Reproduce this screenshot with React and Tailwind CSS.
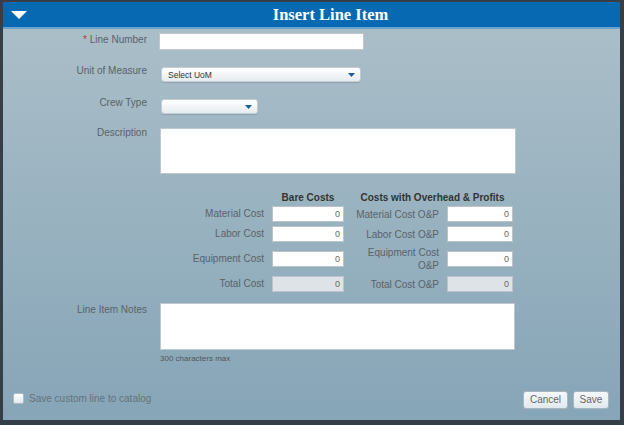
import React from 'react';

// Insert Line Item dialog
const Arrow = () => (
    <svg width="7" height="4" viewBox="0 0 7 4" className="shrink-0">
        <path d="M0 0 L7 0 L3.5 4 Z" fill="#1d5ca6" />
    </svg>
);

function Select({ width, text }) {
    return (
        <div className={`${width} h-[15px] mt-[2px] flex items-center justify-between pl-[6px] pr-[5px] rounded-[3px] border border-[#c5ced5] bg-gradient-to-b from-white to-[#e6ecf0] shadow-[0_1px_1px_rgba(0,0,0,0.12)]`}>
            <span className="text-[8.5px] leading-[10px] text-[#333]">{text}</span>
            <Arrow />
        </div>
    );
}

function Row({ label, required, children, className = '', labelClass = 'mt-[1px]' }) {
    return (
        <div className={`flex items-start ${className}`}>
            <div className={`w-[144px] text-right text-[#59636a] ${labelClass}`}>
                {required && <span className="text-[#b0413e]">* </span>}
                {label}
            </div>
            {children}
        </div>
    );
}

function CostInput({ disabled }) {
    return (
        <input
            readOnly
            value="0"
            className={`h-4 w-full border border-[#bcc4ca] text-right pr-[3px] text-[9px] text-[#666] outline-none ${disabled ? 'bg-[#dde3e7]' : 'bg-white'}`}
        />
    );
}

const costRows = [
    { left: 'Material Cost', right: 'Material Cost O&P' },
    { left: 'Labor Cost', right: 'Labor Cost O&P' },
    { left: 'Equipment Cost', right: 'Equipment Cost O&P' },
    { left: 'Total Cost', right: 'Total Cost O&P', disabled: true },
];

export default function App() {
    return (
        <div className="w-[624px] h-[425px] flex flex-col border-l-[3px] border-r-[4px] border-t-[2px] border-b-[5px] border-[#363f47] font-['Liberation_Sans',Arial,sans-serif] text-[10px] leading-[12px]">
            <div className="h-[27px] shrink-0 flex items-center bg-[#0869b3] border-b-2 border-[#69a2cf]">
                <svg width="16" height="8" viewBox="0 0 16 8" className="ml-[8px] shrink-0">
                    <path d="M0 0 L16 0 L8 8 Z" fill="#fff" />
                </svg>
                <div className="flex-1 text-center pl-[14px] text-white font-bold text-[16.5px] font-['Liberation_Serif','Times_New_Roman',serif]">
                    Insert Line Item
                </div>
            </div>

            <div className="flex-1 flex flex-col pt-[4px] bg-gradient-to-b from-[#aabec8] to-[#86a5b7]">
                <Row label="Line Number" required>
                    <input readOnly className="ml-[12px] h-[17px] w-[205px] border border-[#c0c8ce] bg-white outline-none" />
                </Row>

                <Row label="Unit of Measure" labelClass="" className="mt-[15px]">
                    <div className="ml-[14px]"><Select width="w-[200px]" text="Select UoM" /></div>
                </Row>

                <Row label="Crew Type" labelClass="" className="mt-[15px]">
                    <div className="ml-[14px]"><Select width="w-[97px]" text="" /></div>
                </Row>

                <Row label="Description" labelClass="" className="mt-[13px]">
                    <textarea readOnly className="ml-[13px] mt-[1px] h-[46px] w-[356px] resize-none border border-[#bfc7cd] bg-white outline-none" />
                </Row>

                <div className="ml-[189px] mt-[18px] mb-[2px] grid grid-cols-[72px_72px_87px_66px] gap-x-2 font-bold text-[#333]">
                    <div className="col-start-2 text-center">Bare Costs</div>
                    <div className="col-span-2 text-center">Costs with Overhead &amp; Profits</div>
                </div>

                <div className="ml-[189px] grid grid-cols-[72px_72px_87px_66px] gap-x-2 gap-y-1 items-center text-[#59636a]">
                    {costRows.map((r) => (
                        <React.Fragment key={r.left}>
                            <div className="text-right whitespace-nowrap">{r.left}</div>
                            <CostInput disabled={r.disabled} />
                            <div className="text-right leading-[13px]">{r.right}</div>
                            <CostInput disabled={r.disabled} />
                        </React.Fragment>
                    ))}
                </div>

                <Row label="Line Item Notes" className="mt-[11px]">
                    <textarea readOnly className="ml-[13px] h-[47px] w-[355px] resize-none border border-[#bfc7cd] bg-white outline-none" />
                </Row>
                <div className="ml-[157px] mt-[4px] text-[8px] leading-[10px] text-[#555]">300 characters max</div>

                <div className="mt-auto flex items-center justify-between pl-[10px] pr-[11px] pb-[11px]">
                    <label className="flex items-center gap-[5px] -mt-[3px] text-[#66737b]">
                        <span className="w-[11px] h-[11px] rounded-[2px] border border-[#b3bcc3] bg-gradient-to-b from-white to-[#e4e9ed]" />
                        Save custom line to catalog
                    </label>
                    <div className="flex gap-[5px]">
                        <button className="h-[18px] w-[45px] rounded-[3px] border border-[#aab6be] bg-gradient-to-b from-[#f6f9fb] to-[#e2e9ee] text-[#666] text-[10px]">Cancel</button>
                        <button className="h-[18px] w-[36px] rounded-[3px] border border-[#aab6be] bg-gradient-to-b from-[#f6f9fb] to-[#e2e9ee] text-[#666] text-[10px]">Save</button>
                    </div>
                </div>
            </div>
        </div>
    );
}
